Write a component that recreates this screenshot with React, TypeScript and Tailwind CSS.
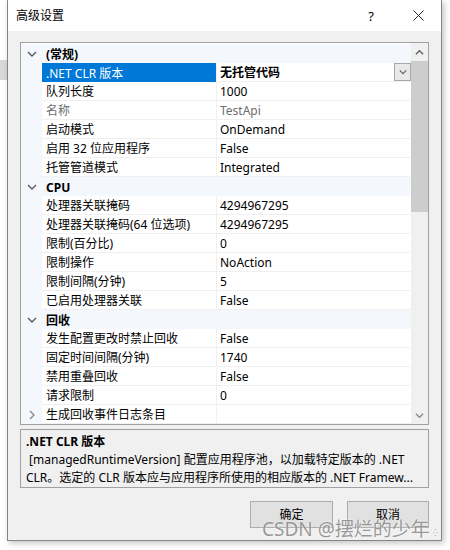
type Row = { name: string; value: string; selected?: boolean; disabled?: boolean; collapsed?: boolean };
type Section = { title: string; rows: Row[] };

const sections: Section[] = [
  {
    title: '(常规)',
    rows: [
      { name: '.NET CLR 版本', value: '无托管代码', selected: true },
      { name: '队列长度', value: '1000' },
      { name: '名称', value: 'TestApi', disabled: true },
      { name: '启动模式', value: 'OnDemand' },
      { name: '启用 32 位应用程序', value: 'False' },
      { name: '托管管道模式', value: 'Integrated' },
    ],
  },
  {
    title: 'CPU',
    rows: [
      { name: '处理器关联掩码', value: '4294967295' },
      { name: '处理器关联掩码(64 位选项)', value: '4294967295' },
      { name: '限制(百分比)', value: '0' },
      { name: '限制操作', value: 'NoAction' },
      { name: '限制间隔(分钟)', value: '5' },
      { name: '已启用处理器关联', value: 'False' },
    ],
  },
  {
    title: '回收',
    rows: [
      { name: '发生配置更改时禁止回收', value: 'False' },
      { name: '固定时间间隔(分钟)', value: '1740' },
      { name: '禁用重叠回收', value: 'False' },
      { name: '请求限制', value: '0' },
      { name: '生成回收事件日志条目', value: '', collapsed: true },
    ],
  },
];

function Chevron({ dir, className }: { dir: 'down' | 'up' | 'right'; className?: string }) {
  const pts = dir === 'down' ? '1,3 5,7 9,3' : dir === 'up' ? '1,7 5,3 9,7' : '3,1 7,5 3,9';
  return (
    <svg width="10" height="10" viewBox="0 0 10 10" className={className}>
      <polyline points={pts} fill="none" stroke="currentColor" strokeWidth="1.4" />
    </svg>
  );
}

function CategoryRow({ title }: { title: string }) {
  return (
    <div className="flex h-[19px] items-center bg-[#f4f7fc]">
      <div className="flex w-[21px] justify-center pt-px text-[#5a5a5a]">
        <Chevron dir="down" />
      </div>
      <span className="pl-[4px] pt-[2px] font-bold text-black">{title}</span>
    </div>
  );
}

function DataRow({ row }: { row: Row }) {
  return (
    <div className="flex h-[19px]">
      <div className="flex w-[21px] items-center justify-center bg-[#f4f7fc] text-[#8a8a8a]">
        {row.collapsed && <Chevron dir="right" />}
      </div>
      <div
        className={
          row.selected
            ? 'flex w-[174px] items-center bg-[#0078d7] pl-[4px] pt-[2px] text-white'
            : 'flex w-[174px] items-center border-b border-[#f0f0f0] bg-white pl-[4px] pt-[2px] ' +
              (row.disabled ? 'text-[#6d6d6d]' : 'text-black')
        }
      >
        <span className="whitespace-nowrap">{row.name}</span>
      </div>
      <div className="w-px bg-[#f0f0f0]" />
      <div className="flex flex-1 items-center border-b border-[#f0f0f0] bg-white pl-[3px]">
        <span
          className={
            'flex-1 whitespace-nowrap pt-[2px] ' +
            (row.selected ? 'font-bold text-black' : row.disabled ? 'text-[#6d6d6d]' : 'text-black')
          }
        >
          {row.value}
        </span>
        {row.selected && (
          <div className="flex h-[18px] w-[17px] items-center justify-center border border-[#a8a8a8] bg-[#e9e9e9] text-[#606060]">
            <Chevron dir="down" className="h-[8px] w-[8px]" />
          </div>
        )}
      </div>
    </div>
  );
}

export default function App() {
  return (
    <div
      className="flex h-[550px] w-[450px] overflow-hidden bg-white text-[12px] leading-[18px] text-black"
      style={{ fontFamily: '"Noto Sans", "Noto Sans CJK SC", sans-serif' }}
    >
      {/* strip of the window behind */}
      <div className="w-[7px] shrink-0">
        <div className="mt-[60px] h-[20px] bg-[#d9d9d9]" />
      </div>

      {/* dialog */}
      <div className="relative flex h-[541px] w-[435px] shrink-0 flex-col border-x border-b border-[#858585] bg-[#f0f0f0] shadow-[2px_2px_6px_rgba(0,0,0,0.25)]">
        {/* title bar */}
        <div className="flex h-[31px] items-center bg-white pl-[8px]">
          <span className="flex-1 text-[12px]">高级设置</span>
          <span className="w-[20px] text-center text-[13px]">?</span>
          <div className="ml-[27px] mr-[13px] flex h-[20px] w-[20px] items-center justify-center">
            <svg width="11" height="11" viewBox="0 0 11 11">
              <path d="M0.5 0.5 L10.5 10.5 M10.5 0.5 L0.5 10.5" stroke="#222" strokeWidth="1" />
            </svg>
          </div>
        </div>

        <div className="flex flex-1 flex-col px-[12px] pt-[11px]">
          {/* property grid */}
          <div className="flex h-[383px] border border-[#a0a0a0] bg-white">
            <div className="flex flex-1 flex-col pt-px">
              {sections.map((s) => (
                <div key={s.title}>
                  <CategoryRow title={s.title} />
                  {s.rows.map((r) => (
                    <DataRow key={r.name} row={r} />
                  ))}
                </div>
              ))}
            </div>
            {/* scrollbar */}
            <div className="flex w-[17px] flex-col bg-[#f0f0f0]">
              <div className="flex h-[18px] items-center justify-center text-[#606060]">
                <Chevron dir="up" className="h-[9px] w-[9px]" />
              </div>
              <div className="h-[151px] bg-[#cdcdcd]" />
              <div className="flex-1" />
              <div className="flex h-[18px] items-center justify-center text-[#8a8a8a]">
                <Chevron dir="down" className="h-[9px] w-[9px]" />
              </div>
            </div>
          </div>

          {/* description */}
          <div className="mt-[4px] h-[59px] border border-[#a0a0a0] pl-[5px] pt-[3px]">
            <div className="font-bold">.NET CLR 版本</div>
            <div className="whitespace-pre"> [managedRuntimeVersion] 配置应用程序池，以加载特定版本的 .NET</div>
            <div className="whitespace-nowrap">CLR。选定的 CLR 版本应与应用程序所使用的相应版本的 .NET Framew...</div>
          </div>

          {/* buttons */}
          <div className="mt-[13px] flex justify-end gap-[14px]">
            <button className="h-[27px] w-[83px] border border-[#adadad] bg-[#e1e1e1] text-[12px]">确定</button>
            <button className="h-[27px] w-[82px] border border-[#adadad] bg-[#e1e1e1] text-[12px]">取消</button>
          </div>
        </div>

        {/* watermark */}
        <div
          className="absolute left-[254px] top-[518px] whitespace-nowrap text-[19px] leading-[22px] text-[rgba(120,120,120,0.75)]"
          style={{ textShadow: '0 0 2px rgba(255,255,255,0.9)' }}
        >
          CSDN @摆烂的少年
        </div>
        <div className="absolute bottom-[3px] right-[3px] text-[8px] leading-[8px] text-[#a0a0a0]">⁛</div>
      </div>
    </div>
  );
}
